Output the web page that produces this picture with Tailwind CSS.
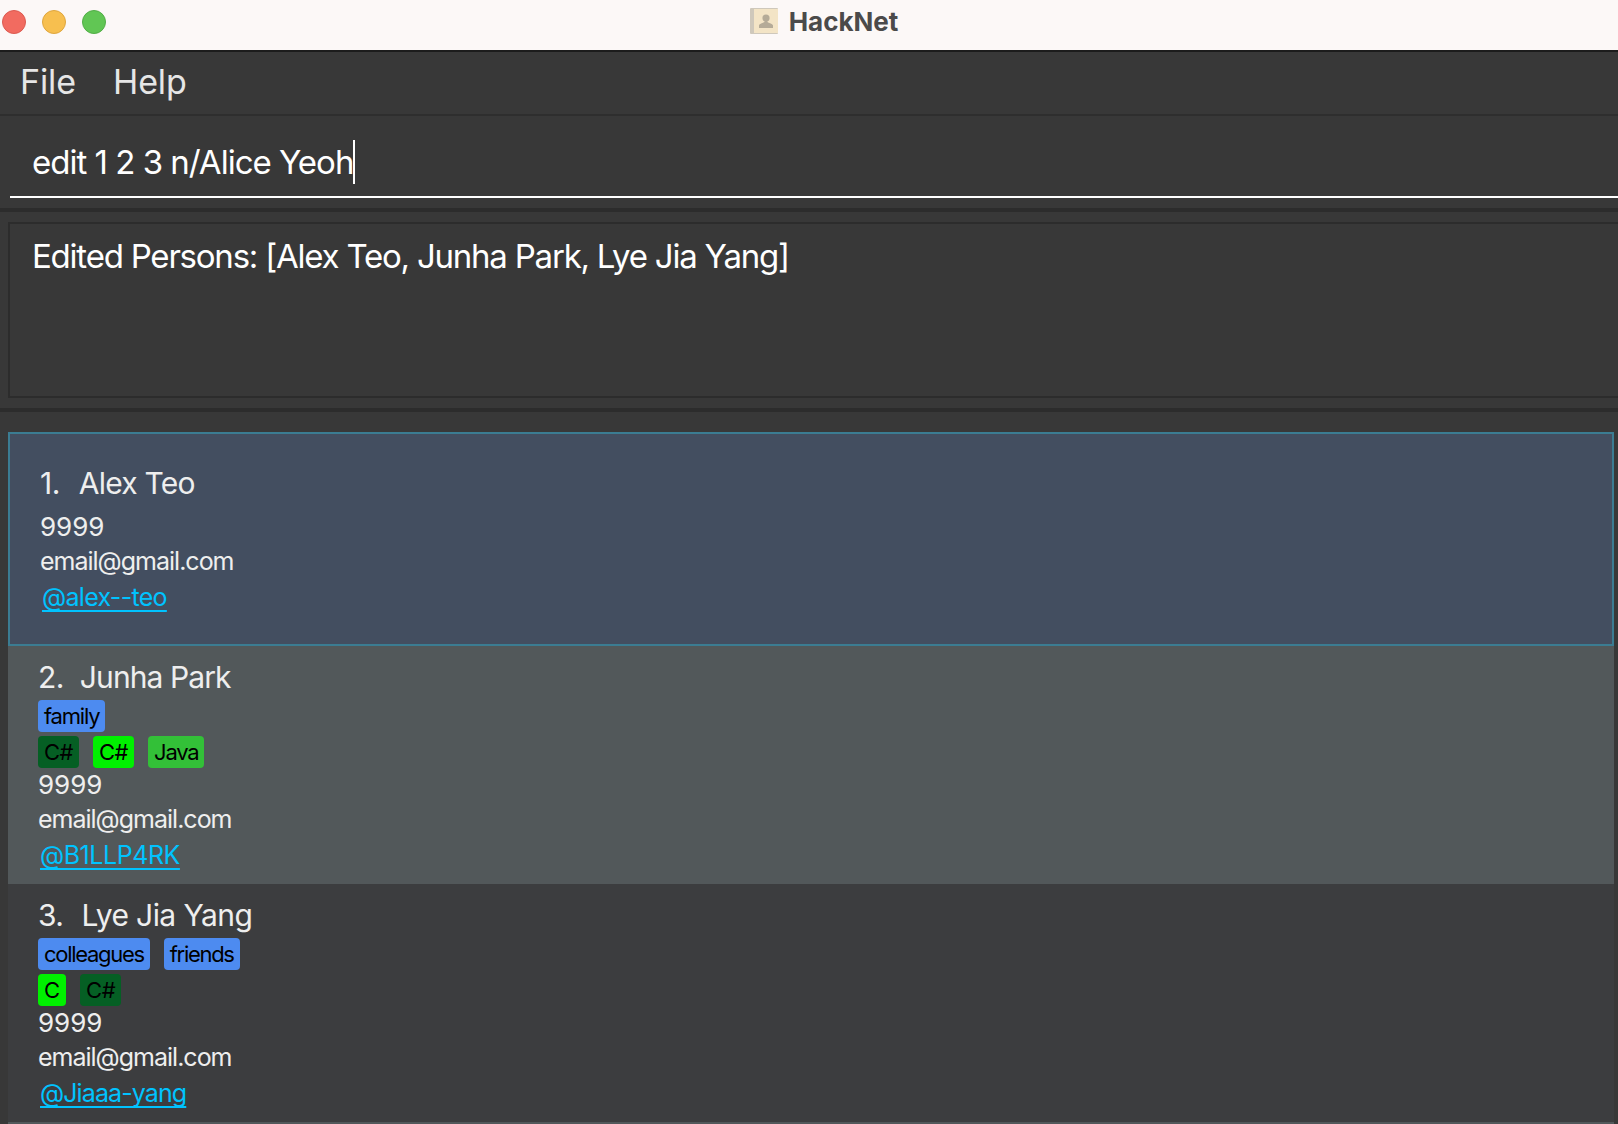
<!DOCTYPE html>
<html lang="en">
<head>
    <meta charset="UTF-8">
    <title>HackNet</title>
    <script src="https://cdn.jsdelivr.net/npm/@tailwindcss/browser@4"></script>
</head>
<body class="w-[1618px] h-[1124px] overflow-hidden bg-[#383838] font-['Inter',sans-serif]">
    <!-- Title bar -->
    <div class="relative h-[52px] pb-[8px] pl-[30px] bg-[#fcf8f7] border-b-2 border-[#1c1c1c] flex items-center justify-center gap-[11px]">
        <div class="absolute left-[2px] top-[10px] flex gap-4">
            <div class="w-6 h-6 rounded-full bg-[#f26b60] border border-[#dc5a50]"></div>
            <div class="w-6 h-6 rounded-full bg-[#f7bf4f] border border-[#dfa63e]"></div>
            <div class="w-6 h-6 rounded-full bg-[#61c654] border border-[#52ae47]"></div>
        </div>
        <svg class="w-7 h-[27px]" viewBox="0 0 28 27">
            <rect x="0" y="0" width="28" height="26" rx="1" fill="#cfc8bb"/>
            <rect x="4" y="1" width="24" height="24" fill="#f3e4c6"/>
            <circle cx="16" cy="10" r="3.6" fill="#b5ab98"/>
            <path d="M9 20v-2.5c0-1.5 4-2.5 5.5-3.5v-1h3v1c1.5 1 5.500 2 5.500 3.500V20z" fill="#b5ab98"/>
        </svg>
        <span class="text-[26px] font-bold text-[#4b4a4a]">HackNet</span>
    </div>

    <!-- Menu bar -->
    <div class="h-[64px] pb-[3px] flex items-center gap-[37px] pl-[20px] text-[34px] tracking-[-0.1px] text-[#e6e6e6] border-b-2 border-[#2e2e2e]">
        <span>File</span>
        <span>Help</span>
    </div>

    <!-- Command box -->
    <div class="h-[96px] pl-[10px] border-b-[4px] border-[#2c2c2c]">
        <div class="h-[82px] pl-[22px] pt-[24px] border-b-2 border-white">
            <span class="inline-block h-[44px] leading-[44px] border-r-2 border-white text-[33px] tracking-[-1px] text-white">edit 1 2 3 n/Alice Yeoh</span>
        </div>
    </div>

    <!-- Result display -->
    <div class="h-[200px] pl-[8px] pt-[10px] border-b-[4px] border-[#2c2c2c]">
        <div class="h-[176px] pl-[22px] pt-[8px] border-2 border-r-0 border-[#2c2c2c] text-[33px] tracking-[-1.22px] text-white">
            Edited Persons: [Alex Teo, Junha Park, Lye Jia Yang]
        </div>
    </div>

    <!-- Person list -->
    <div class="pt-5 pl-2 pr-1">
        <div class="h-[214px] pl-[30px] pt-[29px] bg-[#434e60] border-2 border-[#3b7c92]">
            <div class="text-[30px] leading-[40px] tracking-[-0.5px] text-[#eeeeee]">1.&nbsp; <span class="ml-[3px] tracking-[-0.75px]">Alex Teo</span></div>
            <div class="mt-[6px] text-[26px] leading-[35px] text-[#eeeeee]">9999</div>
            <div class="text-[25px] leading-[35px] tracking-[-1px] text-[#eeeeee]">email@gmail.com</div>
            <div class="pl-0.5 text-[25px] leading-[36px] tracking-[-0.7px] text-[#00c3ff] underline underline-offset-[4px] [text-decoration-skip-ink:none]">@alex--teo</div>
        </div>

        <div class="h-[238px] pl-[30px] bg-[#52585a]">
            <div class="pt-[11px] text-[30px] leading-[40px] tracking-[-0.5px] text-[#eeeeee]">2.&nbsp; <span class="tracking-[-0.9px]">Junha Park</span></div>
            <div class="mt-[3px] flex gap-[14px]">
                <span class="h-8 px-[6px] leading-8 rounded-[4px] text-[22px] tracking-[-1.2px] text-black bg-[#4d8bf0]">family</span>
            </div>
            <div class="mt-[4px] flex gap-[14px]">
                <span class="h-8 px-[6px] leading-8 rounded-[4px] text-[22px] tracking-[-0.5px] text-black bg-[#055f24]">C#</span>
                <span class="h-8 px-[6px] leading-8 rounded-[4px] text-[22px] tracking-[-0.5px] text-black bg-[#00f000]">C#</span>
                <span class="h-8 px-[6px] leading-8 rounded-[4px] text-[22px] tracking-[-1.2px] text-black bg-[#33c038]">Java</span>
            </div>
            <div class="text-[26px] leading-[34px] text-[#eeeeee]">9999</div>
            <div class="text-[25px] leading-[35px] tracking-[-1px] text-[#eeeeee]">email@gmail.com</div>
            <div class="pl-0.5 text-[25px] leading-[36px] tracking-[-0.45px] text-[#00c3ff] underline underline-offset-[4px] [text-decoration-skip-ink:none]">@B1LLP4RK</div>
        </div>

        <div class="h-[240px] pl-[30px] bg-[#3c3d3f] border-b-2 border-[#52585a]">
            <div class="pt-[11px] text-[30px] leading-[40px] tracking-[-0.5px] text-[#eeeeee]">3.&nbsp; <span class="ml-[2px] tracking-[-0.6px]">Lye Jia Yang</span></div>
            <div class="mt-[3px] flex gap-[14px]">
                <span class="h-8 px-[6px] leading-8 rounded-[4px] text-[22px] tracking-[-1.3px] text-black bg-[#4d8bf0]">colleagues</span>
                <span class="h-8 px-[6px] leading-8 rounded-[4px] text-[22px] tracking-[-1.3px] text-black bg-[#4d8bf0]">friends</span>
            </div>
            <div class="mt-[4px] flex gap-[14px]">
                <span class="h-8 px-[6px] leading-8 rounded-[4px] text-[22px] text-black bg-[#00f000]">C</span>
                <span class="h-8 px-[6px] leading-8 rounded-[4px] text-[22px] tracking-[-0.5px] text-black bg-[#055f24]">C#</span>
            </div>
            <div class="text-[26px] leading-[34px] text-[#eeeeee]">9999</div>
            <div class="text-[25px] leading-[35px] tracking-[-1px] text-[#eeeeee]">email@gmail.com</div>
            <div class="pl-0.5 text-[25px] leading-[36px] tracking-[-0.9px] text-[#00c3ff] underline underline-offset-[4px] [text-decoration-skip-ink:none]">@Jiaaa-yang</div>
        </div>
    </div>
</body>
</html>
